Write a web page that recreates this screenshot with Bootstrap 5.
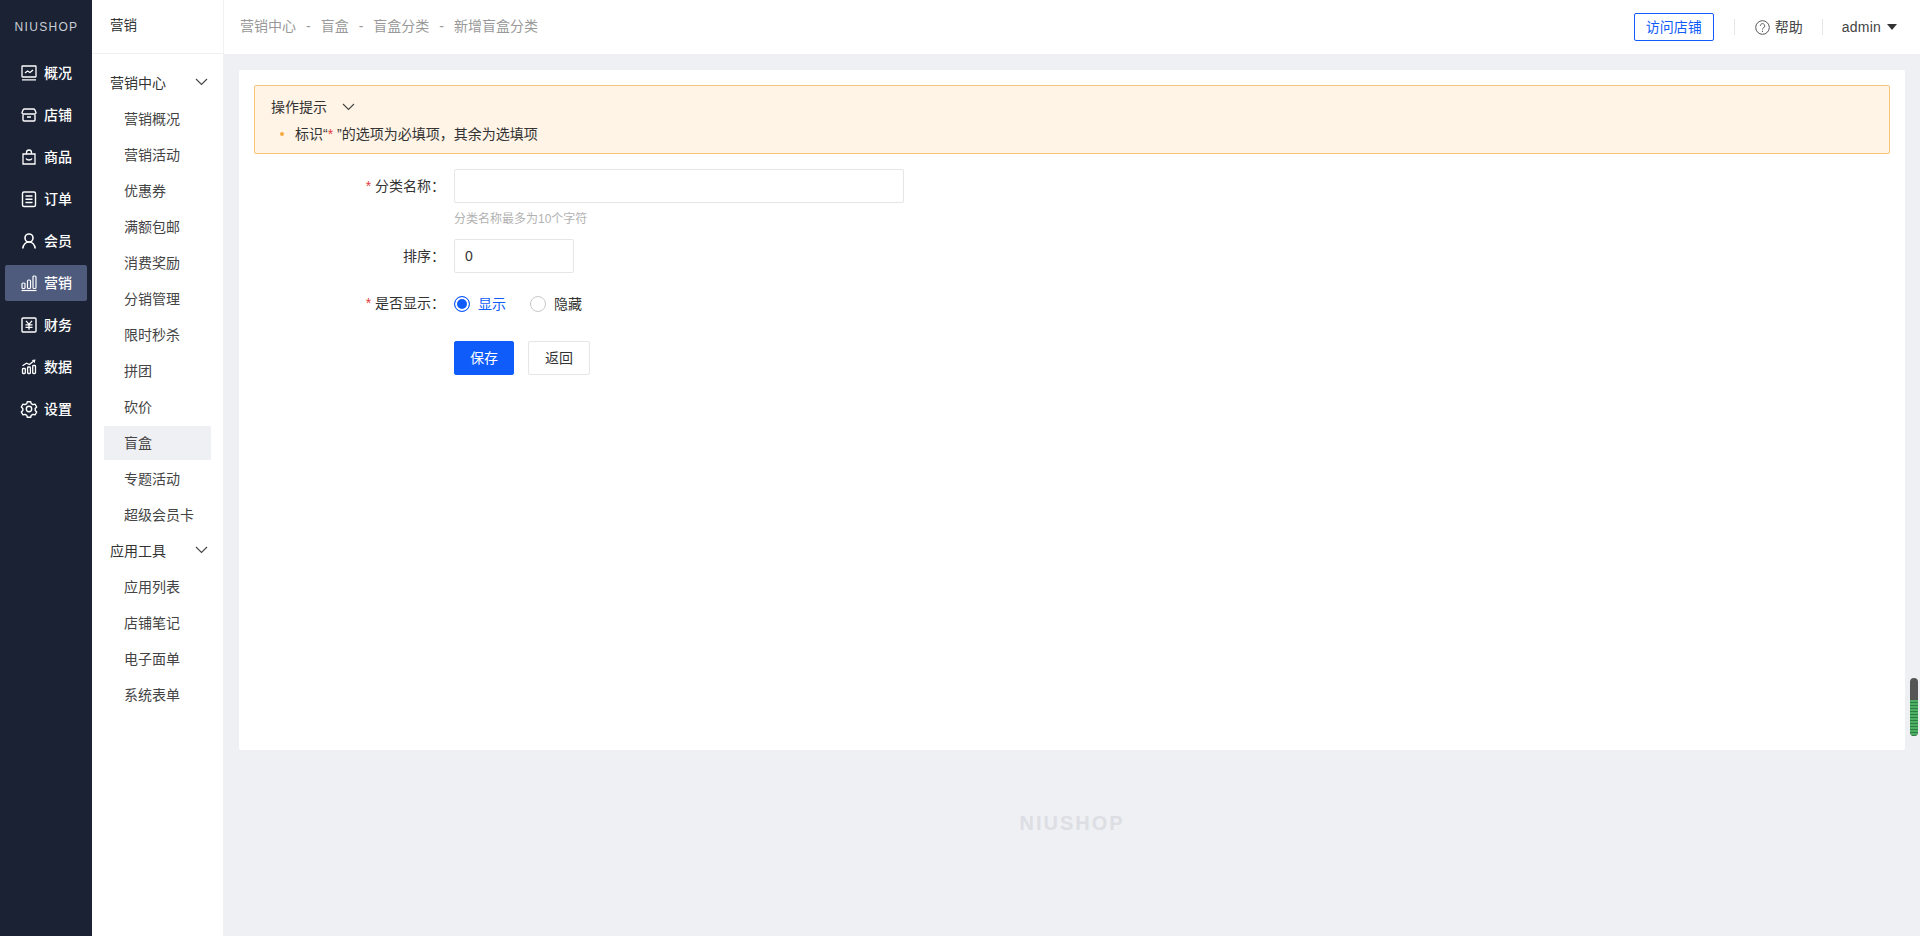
<!doctype html>
<html lang="zh-CN">
<head>
<meta charset="utf-8">
<title>新增盲盒分类</title>
<link href="https://cdn.jsdelivr.net/npm/bootstrap@5.3.0/dist/css/bootstrap.min.css" rel="stylesheet">
<style>
body{font-family:"Liberation Sans","Noto Sans CJK SC",sans-serif;font-size:14px;color:#333;background:#eff0f4;height:936px;overflow:hidden}
.ns-shell{height:936px}
.ns-rail{width:92px;background:#1a2233;flex:none}
.ns-logo{height:54px;color:#c9cdd6;font-size:12px;letter-spacing:1.3px;padding-left:1px}
.ns-rail-list{gap:6px;padding:0 5px;margin-top:1px}
.ns-rail-item{height:36px;color:#fff;font-size:14px;font-weight:500;padding-left:15px;gap:6px;border-radius:2px;text-decoration:none}
.ns-rail-item.is-on{background:#4f5b7d}
.ns-rail-item svg{width:18px;height:18px;flex:none}
.ns-side{width:132px;background:#fff;flex:none;border-right:1px solid #f1f1f3}
.ns-side-head{height:54px;border-bottom:1px solid #eff0f4;padding-left:18px;font-size:13.5px}
.ns-side-body{padding:12px 12px 0;gap:2px}
.ns-group,.ns-sub{height:34px;color:#333;text-decoration:none;font-size:14px}
.ns-group{padding:0 3px 0 6px;justify-content:space-between}
.ns-group svg{margin-bottom:3px}
.ns-sub{padding-left:20px;color:#444}
.ns-sub.is-on{background:#eff0f4}
.ns-main{min-width:0}
.ns-top{height:54px;background:#fff;flex:none;padding:0 23px 0 16px}
.ns-crumb{color:#999;gap:9px;font-size:14px;margin-top:-1px}
.ns-crumb i{font-style:normal;padding:0 1px}
.ns-visit{width:80px;height:28px;padding:0;font-size:14px;color:#105cfb;border:1px solid #105cfb;border-radius:2px;line-height:26px;background:#fff}
.ns-sep{width:1px;height:16px;background:#e6e6e6;margin:0 20px}
.ns-sep-b{margin:0 19px}
.ns-help{color:#444;gap:5px}
.ns-admin{color:#444;gap:6px;letter-spacing:.2px}
.ns-caret{width:0;height:0;border-left:5.5px solid transparent;border-right:5.5px solid transparent;border-top:6px solid #333}
.ns-card{margin:16px 15px 0;height:680px;background:#fff;border-radius:2px;padding:15px}
.ns-tip{height:69px;background:#fff4e6;border:1px solid #f5c67c;border-radius:2px;padding:11px 16px 0}
.ns-tip-head{gap:15px;line-height:20px}
.ns-tip-line{margin-top:7px;padding-left:9px;gap:11px;font-size:14px;line-height:20px}
.ns-dot{width:4px;height:4px;border-radius:50%;background:#f7a941}
.ns-req{color:#e4393c}
.ns-form{padding-top:15px}
.ns-row{display:flex;align-items:center}
.ns-label{width:191px;text-align:right;flex:none;color:#333;margin-right:9px}
.ns-input{height:34px;border:1px solid #e6e6e6;border-radius:2px;padding:0 10px;font-size:14px;color:#333;box-shadow:none}
.ns-w450{width:450px}.ns-w120{width:120px}
.ns-hint{margin-left:200px;font-size:12px;color:#b2b2b2;line-height:18px;margin-top:7px;margin-bottom:11px}
.ns-radio{width:16px;height:16px;border-radius:50%;border:1px solid #c9c9c9;background:#fff;flex:none}
.ns-radio.is-on{border-color:#105cfb;box-shadow:inset 0 0 0 2px #fff;background:#105cfb}
.ns-opt{gap:8px;line-height:20px}
.ns-btn{height:34px;width:60px;padding:0;font-size:14px;border-radius:2px}
.ns-save{background:#105cfb;border-color:#105cfb;color:#fff}
.ns-back{background:#fff;border-color:#e6e6e6;color:#333;width:62px}
.ns-foot{flex:1;color:#dcdee3;font-size:20px;letter-spacing:2px;font-weight:700;padding-top:58px}
.ns-gap-radio{margin-top:20px}
.ns-gap-btn{margin-top:27px;padding-left:200px;gap:14px}
.ns-blue{color:#105cfb}
.ns-scroll{top:678px;right:2px;width:8px;height:58px;border-radius:4px;overflow:hidden;background:#555}
.ns-scroll-fill{position:absolute;left:0;right:0;bottom:0;height:36px;background:repeating-linear-gradient(to bottom,#4caf62 0 2px,#2f7d46 2px 3px)}
</style>
</head>
<body>
<div class="ns-shell d-flex position-relative">
  <nav class="ns-rail d-flex flex-column">
    <div class="ns-logo d-flex align-items-center justify-content-center">NIUSHOP</div>
    <div class="ns-rail-list d-flex flex-column">
      <a class="ns-rail-item d-flex align-items-center" href="#"><svg viewBox="0 0 18 18" fill="none" stroke="#fff" stroke-width="1.3"><rect x="2" y="2" width="14" height="11" rx=".5"/><path d="M2 15.800h14M5 9l2.500-2 2.500 1.500 3-2.500"/></svg>概况</a>
      <a class="ns-rail-item d-flex align-items-center" href="#"><svg viewBox="0 0 18 18" fill="none" stroke="#fff" stroke-width="1.4"><path d="M3.500 8C2 8 1.800 6.800 2.200 6l1-2.200C3.500 3.200 4 3 4.500 3h9c.5 0 1 .2 1.300.8l1 2.200c.4.800.2 2-1.300 2zM3 8v6a1 1 0 0 0 1 1h10a1 1 0 0 0 1-1V8M7 11h4"/></svg>店铺</a>
      <a class="ns-rail-item d-flex align-items-center" href="#"><svg viewBox="0 0 18 18" fill="none" stroke="#fff" stroke-width="1.3"><path d="M3 6h12v10H3zM6.500 6V4.500a2.500 2.500 0 0 1 5 0V6M6 10.500c1 2 5 2 6 0"/></svg>商品</a>
      <a class="ns-rail-item d-flex align-items-center" href="#"><svg viewBox="0 0 18 18" fill="none" stroke="#fff" stroke-width="1.4"><rect x="2.500" y="2" width="13" height="14.500" rx="1.500"/><path d="M5.500 6h7M5.500 9.200h7M5.500 12.500h7"/></svg>订单</a>
      <a class="ns-rail-item d-flex align-items-center" href="#"><svg viewBox="0 0 18 18" fill="none" stroke="#fff" stroke-width="1.6"><circle cx="9" cy="6" r="4"/><path d="M2.800 16.500c.5-3.800 3-6.500 6.200-6.500s5.700 2.700 6.200 6.500"/></svg>会员</a>
      <a class="ns-rail-item is-on d-flex align-items-center" href="#"><svg viewBox="0 0 18 18" fill="none" stroke="#fff" stroke-width="1.200"><path d="M1.500 16.500h15"/><rect x="2" y="9" width="3" height="5.500" rx="1"/><rect x="7.500" y="6" width="3" height="8.500" rx="1"/><rect x="13" y="2" width="3" height="12.500" rx="1"/></svg>营销</a>
      <a class="ns-rail-item d-flex align-items-center" href="#"><svg viewBox="0 0 18 18" fill="none" stroke="#fff" stroke-width="1.400"><path d="M3 2h12a1 1 0 0 1 1 1v12a1 1 0 0 1-1 1H3a1 1 0 0 1-1-1V3a1 1 0 0 1 1-1z"/><path d="M6 4.800l3 3.500 3-3.500M5.500 8.800h7M5.500 11.300h7M9 8.300v5.500" stroke-width="1.300"/></svg>财务</a>
      <a class="ns-rail-item d-flex align-items-center" href="#"><svg viewBox="0 0 18 18" fill="none" stroke="#fff" stroke-width="1.300"><rect x="2.500" y="10.500" width="2.800" height="5" rx=".8"/><rect x="7.600" y="9" width="2.800" height="6.500" rx=".8"/><rect x="12.700" y="7.500" width="2.800" height="8" rx=".8"/><path d="M2.500 7.800l4-2.600 3 1.300L13 3.500"/><path d="M11.800 2l3.700-.4-.9 3.600z" fill="#fff" stroke="none"/></svg>数据</a>
      <a class="ns-rail-item d-flex align-items-center" href="#"><svg viewBox="0 0 18 18" fill="none" stroke="#fff" stroke-width="1.400" stroke-linejoin="round"><path d="M7.300 2h3.400l.5 2 1.800 1 2-.6 1.700 2.900-1.500 1.500v2l1.500 1.500-1.700 2.900-2-.6-1.800 1-.5 2H7.300l-.5-2-1.800-1-2 .6-1.700-2.900 1.500-1.500v-2L1.300 7.300 3 4.400l2 .6 1.800-1z" transform="translate(0 -.3)"/><circle cx="9" cy="9" r="2.700"/></svg>设置</a>
    </div>
  </nav>
  <aside class="ns-side d-flex flex-column">
    <div class="ns-side-head d-flex align-items-center">营销</div>
    <div class="ns-side-body d-flex flex-column">
      <a class="ns-group d-flex align-items-center" href="#">营销中心<svg width="13" height="8" viewBox="0 0 13 8" fill="none" stroke="#444" stroke-width="1.100"><path d="M1 1l5.500 5.500L12 1"/></svg></a>
      <a class="ns-sub d-flex align-items-center" href="#">营销概况</a>
      <a class="ns-sub d-flex align-items-center" href="#">营销活动</a>
      <a class="ns-sub d-flex align-items-center" href="#">优惠券</a>
      <a class="ns-sub d-flex align-items-center" href="#">满额包邮</a>
      <a class="ns-sub d-flex align-items-center" href="#">消费奖励</a>
      <a class="ns-sub d-flex align-items-center" href="#">分销管理</a>
      <a class="ns-sub d-flex align-items-center" href="#">限时秒杀</a>
      <a class="ns-sub d-flex align-items-center" href="#">拼团</a>
      <a class="ns-sub d-flex align-items-center" href="#">砍价</a>
      <a class="ns-sub is-on d-flex align-items-center" href="#">盲盒</a>
      <a class="ns-sub d-flex align-items-center" href="#">专题活动</a>
      <a class="ns-sub d-flex align-items-center" href="#">超级会员卡</a>
      <a class="ns-group d-flex align-items-center" href="#">应用工具<svg width="13" height="8" viewBox="0 0 13 8" fill="none" stroke="#444" stroke-width="1.100"><path d="M1 1l5.500 5.500L12 1"/></svg></a>
      <a class="ns-sub d-flex align-items-center" href="#">应用列表</a>
      <a class="ns-sub d-flex align-items-center" href="#">店铺笔记</a>
      <a class="ns-sub d-flex align-items-center" href="#">电子面单</a>
      <a class="ns-sub d-flex align-items-center" href="#">系统表单</a>
    </div>
  </aside>
  <main class="ns-main flex-grow-1 d-flex flex-column">
    <header class="ns-top d-flex align-items-center justify-content-between">
      <div class="ns-crumb d-flex align-items-center"><span>营销中心</span><i>-</i><span>盲盒</span><i>-</i><span>盲盒分类</span><i>-</i><span>新增盲盒分类</span></div>
      <div class="d-flex align-items-center">
        <button class="ns-visit" type="button">访问店铺</button>
        <span class="ns-sep"></span>
        <span class="ns-help d-flex align-items-center"><svg width="15" height="15" viewBox="0 0 15 15" fill="none" stroke="#555" stroke-width="1"><circle cx="7.500" cy="7.500" r="6.800"/><path d="M5.300 5.800a2.200 2.200 0 1 1 3.400 1.900c-.8.500-1.200.9-1.200 1.800M7.500 10.800v1.200"/></svg>帮助</span>
        <span class="ns-sep ns-sep-b"></span>
        <span class="ns-admin d-flex align-items-center">admin<span class="ns-caret"></span></span>
      </div>
    </header>
    <section class="ns-card">
      <div class="ns-tip">
        <div class="ns-tip-head d-flex align-items-center">操作提示<svg width="13" height="8" viewBox="0 0 13 8" fill="none" stroke="#444" stroke-width="1.100"><path d="M1 1l5.500 5.500L12 1"/></svg></div>
        <div class="ns-tip-line d-flex align-items-center"><span class="ns-dot"></span><span>标识“<span class="ns-req">*</span> ”的选项为必填项，其余为选填项</span></div>
      </div>
      <form class="ns-form">
        <div class="ns-row">
          <label class="ns-label"><span class="ns-req">*</span> 分类名称：</label>
          <input class="form-control ns-input ns-w450" type="text" aria-label="分类名称">
        </div>
        <div class="ns-hint">分类名称最多为10个字符</div>
        <div class="ns-row">
          <label class="ns-label">排序：</label>
          <input class="form-control ns-input ns-w120" type="text" value="0" aria-label="排序">
        </div>
        <div class="ns-row ns-gap-radio">
          <label class="ns-label"><span class="ns-req">*</span> 是否显示：</label>
          <div class="d-flex align-items-center gap-4">
            <span class="ns-opt ns-blue d-flex align-items-center"><span class="ns-radio is-on"></span>显示</span>
            <span class="ns-opt d-flex align-items-center"><span class="ns-radio"></span>隐藏</span>
          </div>
        </div>
        <div class="ns-row ns-gap-btn">
          <button class="btn ns-btn ns-save" type="button">保存</button>
          <button class="btn ns-btn ns-back" type="button">返回</button>
        </div>
      </form>
    </section>
    <footer class="ns-foot text-center">NIUSHOP</footer>
  </main>
  <div class="ns-scroll position-absolute"><div class="ns-scroll-fill"></div></div>
</div>
</body>
</html>
